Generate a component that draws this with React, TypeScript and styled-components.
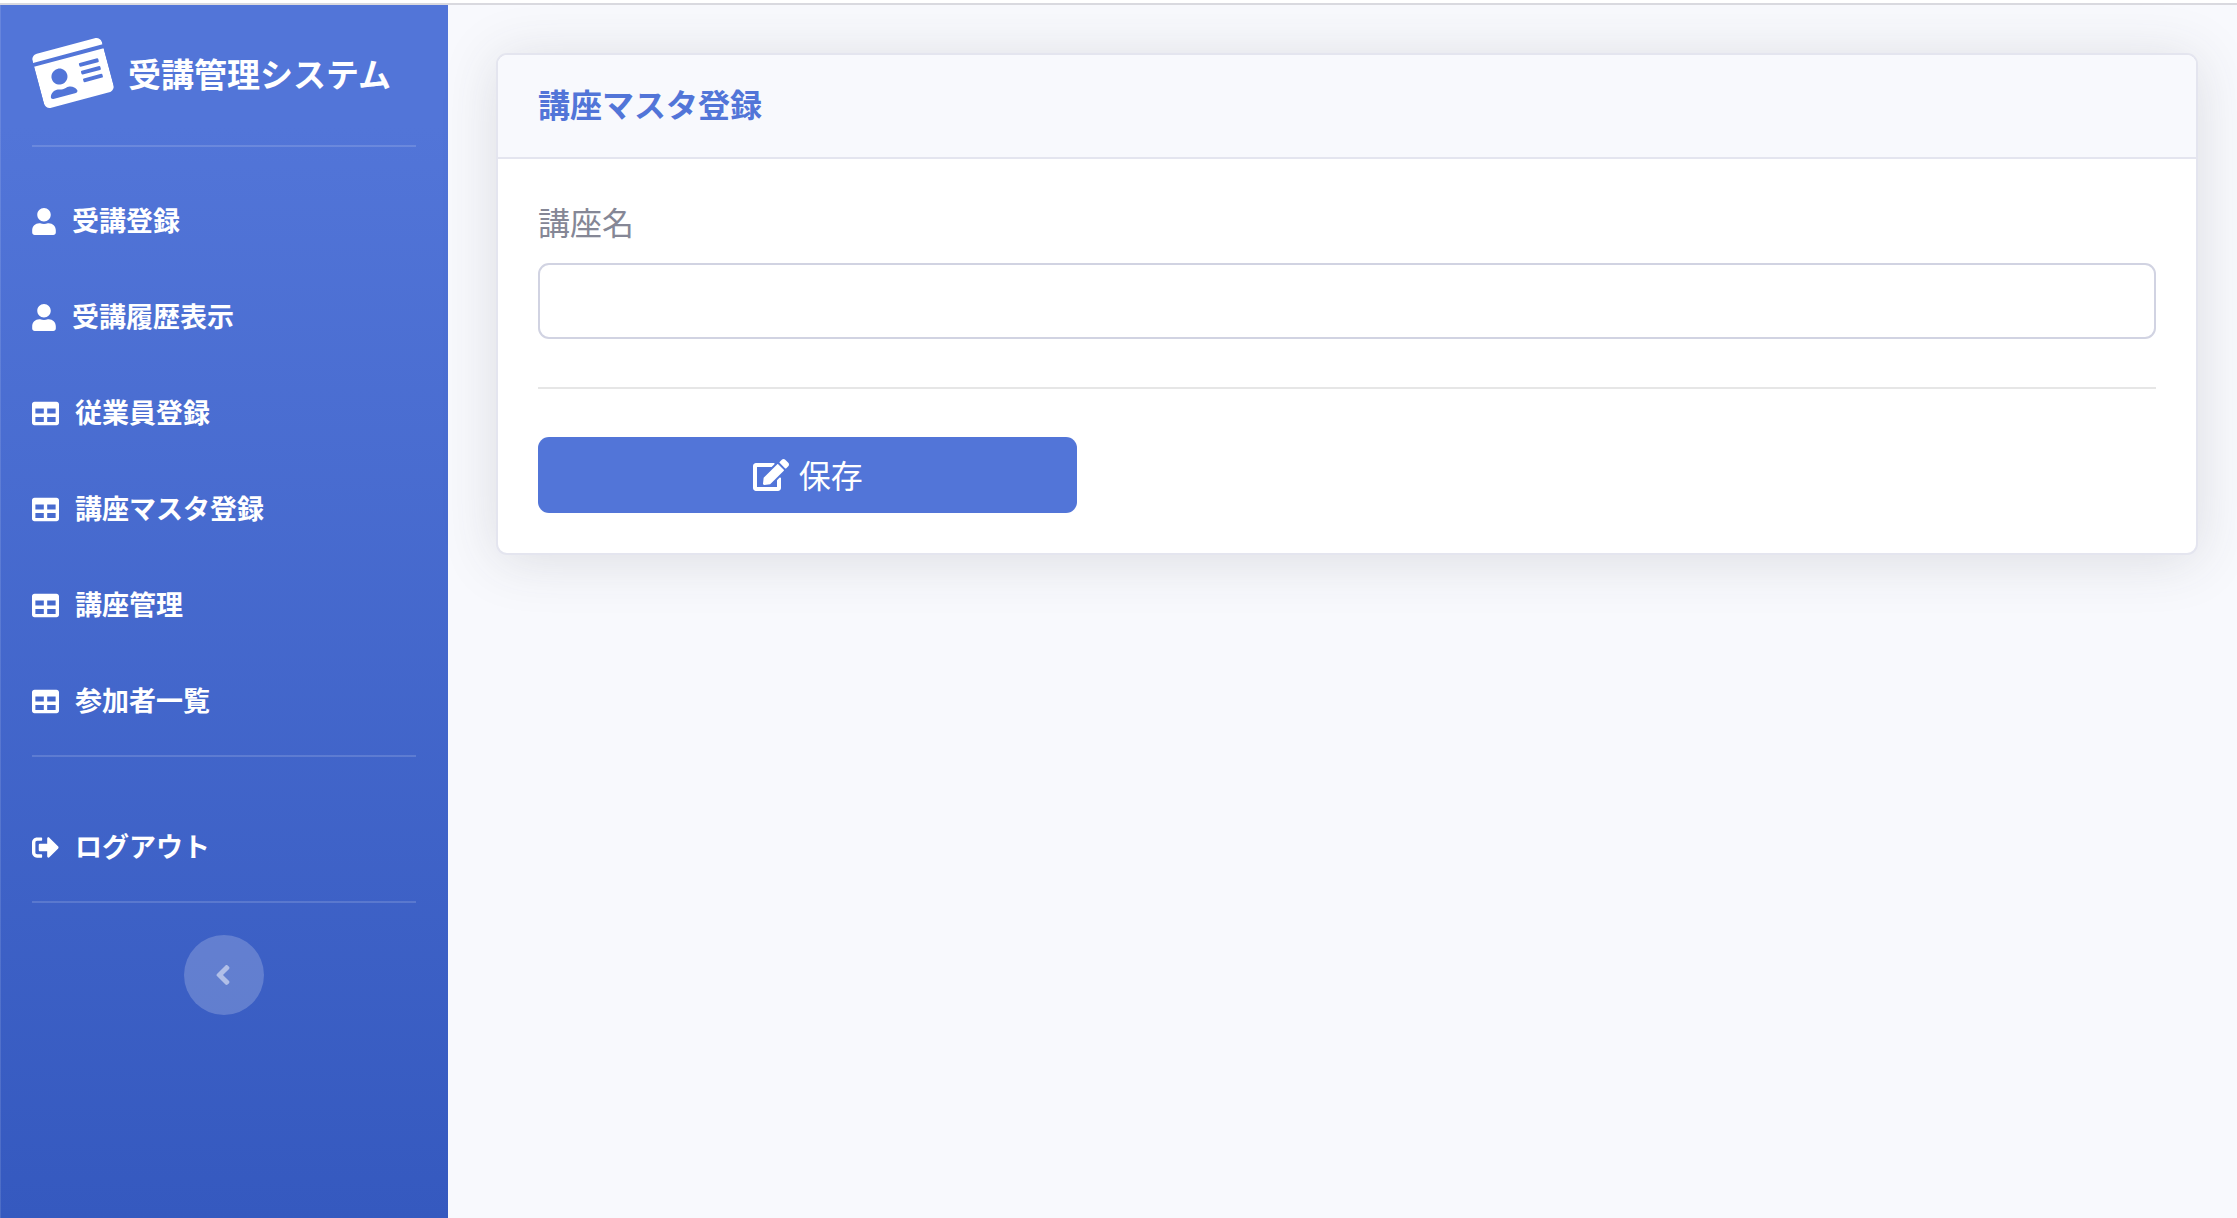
import React from 'react';
import styled, { createGlobalStyle } from 'styled-components';
import { FaAngleLeft, FaEdit, FaIdCard, FaSignOutAlt, FaTable, FaUser } from 'react-icons/fa';

const GlobalStyle = createGlobalStyle`
  *, *::before, *::after { box-sizing: border-box; }
  body {
    margin: 0;
    background: #f8f9fd;
    color: #858796;
    font-family: "Noto Sans CJK JP", sans-serif;
    font-size: 32px;
    line-height: 48px;
  }
`;

const Page = styled.div`
  min-height: 100vh;
  display: flex;
  flex-direction: column;
`;

const TopEdge = styled.div`
  height: 5px;
  background: #fff;
  border-bottom: 2px solid #d9d9df;
`;

const Wrapper = styled.div`
  flex: 1;
  display: flex;
`;

const Sidebar = styled.nav`
  flex: 0 0 448px;
  display: flex;
  flex-direction: column;
  color: #fff;
  background: linear-gradient(180deg, #5275d8 10%, #3559bf 100%);
  box-shadow: inset 1px 0 0 rgba(255, 255, 255, 0.12);
`;

const Brand = styled.a`
  height: 140px;
  padding: 0 32px 4px;
  display: flex;
  align-items: center;
  gap: 19px;
  color: inherit;
  font-size: 33px;
  font-weight: 700;
  white-space: nowrap;
  text-decoration: none;

  svg {
    width: 72px;
    height: 64px;
    margin-left: 5px;
    transform: rotate(-15deg);
  }
`;

const Divider = styled.hr`
  width: auto;
  height: 2px;
  margin: 0 32px;
  border: 0;
  background: rgba(255, 255, 255, 0.15);
`;

const NavList = styled.ul<{ $top: number }>`
  margin: 0;
  padding: ${({ $top }) => $top}px 0 6px;
  list-style: none;
`;

const NavLink = styled.a<{ $iconWidth: number }>`
  height: 96px;
  padding: 0 32px;
  display: flex;
  align-items: center;
  gap: 16px;
  color: inherit;
  font-size: 27px;
  font-weight: 700;
  text-decoration: none;

  svg {
    width: ${({ $iconWidth }) => $iconWidth}px;
    height: 27px;
  }
`;

const Caption = styled.span`
  padding-bottom: 3px;
`;

const Toggle = styled.button`
  width: 80px;
  height: 80px;
  margin: 32px auto;
  padding: 0 3px 0 0;
  display: flex;
  align-items: center;
  justify-content: center;
  border: 0;
  border-radius: 50%;
  background: rgba(255, 255, 255, 0.2);
  color: rgba(255, 255, 255, 0.5);
  cursor: pointer;

  svg {
    width: 16px;
    height: 32px;
  }
`;

const Main = styled.main`
  flex: 1;
  min-width: 0;
  padding: 48px 39px 48px 48px;
`;

const Card = styled.section`
  border: 2px solid #e4e5ef;
  border-radius: 11px;
  background: #fff;
  box-shadow: 0 5px 56px rgba(58, 59, 69, 0.15);
`;

const CardHeader = styled.header`
  padding: 24px 40px 30px;
  border-bottom: 2px solid #e4e5ef;
  border-radius: 9px 9px 0 0;
  background: #f8f9fd;
`;

const Title = styled.h1`
  margin: 0;
  color: #5275d8;
  font-size: 32px;
  font-weight: 700;
  line-height: 48px;
`;

const CardForm = styled.form`
  padding: 40px;
`;

const Label = styled.label`
  display: block;
  margin-bottom: 20px;
  line-height: 44px;
`;

const TextInput = styled.input`
  display: block;
  width: 100%;
  height: 76px;
  padding: 12px 24px;
  border: 2px solid #d1d3e2;
  border-radius: 11px;
  background: #fff;
  color: #6e707e;
  font: inherit;
`;

const Rule = styled.hr`
  height: 2px;
  margin: 48px 0;
  border: 0;
  background: #e6e6e6;
`;

const SaveButton = styled.button`
  width: calc(100% / 3);
  height: 76px;
  display: flex;
  align-items: center;
  justify-content: center;
  gap: 10px;
  border: 0;
  border-radius: 11px;
  background: #5275d8;
  color: #fff;
  font: inherit;
  cursor: pointer;

  svg {
    width: 36px;
    height: 32px;
  }
`;

const menu = [
  { label: '受講登録', Icon: FaUser, iconWidth: 24 },
  { label: '受講履歴表示', Icon: FaUser, iconWidth: 24 },
  { label: '従業員登録', Icon: FaTable, iconWidth: 27 },
  { label: '講座マスタ登録', Icon: FaTable, iconWidth: 27 },
  { label: '講座管理', Icon: FaTable, iconWidth: 27 },
  { label: '参加者一覧', Icon: FaTable, iconWidth: 27 },
];

export default function App() {
  return (
    <Page>
      <GlobalStyle />
      <TopEdge />
      <Wrapper>
        <Sidebar>
          <Brand href="#">
            <FaIdCard />
            受講管理システム
          </Brand>
          <Divider />
          <NavList $top={26}>
            {menu.map(({ label, Icon, iconWidth }) => (
              <li key={label}>
                <NavLink href="#" $iconWidth={iconWidth}>
                  <Icon />
                  <Caption>{label}</Caption>
                </NavLink>
              </li>
            ))}
          </NavList>
          <Divider />
          <NavList $top={42}>
            <li>
              <NavLink href="#" $iconWidth={27}>
                <FaSignOutAlt />
                <Caption>ログアウト</Caption>
              </NavLink>
            </li>
          </NavList>
          <Divider />
          <Toggle type="button" aria-label="メニューを閉じる">
            <FaAngleLeft />
          </Toggle>
        </Sidebar>
        <Main>
          <Card>
            <CardHeader>
              <Title>講座マスタ登録</Title>
            </CardHeader>
            <CardForm onSubmit={(event) => event.preventDefault()}>
              <Label htmlFor="course-name">講座名</Label>
              <TextInput id="course-name" type="text" />
              <Rule />
              <SaveButton type="submit">
                <FaEdit />
                <Caption>保存</Caption>
              </SaveButton>
            </CardForm>
          </Card>
        </Main>
      </Wrapper>
    </Page>
  );
}
